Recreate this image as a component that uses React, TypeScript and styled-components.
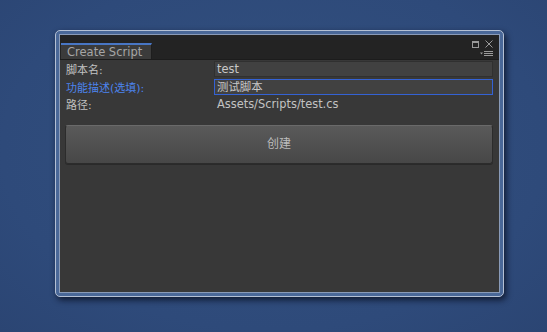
import * as React from "react";
import styled, { createGlobalStyle } from "styled-components";

const GlobalStyle = createGlobalStyle`
  html, body {
    margin: 0;
    padding: 0;
    background: #2e4a7a;
    font-family: "DejaVu Sans", "Noto Sans CJK SC", sans-serif;
  }
`;

interface RowData {
  label: string;
  value: string;
  kind: "field" | "focused" | "text";
}

const rows: RowData[] = [
  { label: "脚本名:", value: "test", kind: "field" },
  { label: "功能描述(选填):", value: "测试脚本", kind: "focused" },
  { label: "路径:", value: "Assets/Scripts/test.cs", kind: "text" },
];

const App: React.FC = () => (
  <Page>
    <GlobalStyle />
    <Window>
      <Frame>
        <Inner>
          <TitleBar>
            <Tab>Create Script</Tab>
            <Controls>
              <ControlRow>
                <MaxIcon />
                <svg width="8" height="8" viewBox="0 0 8 8">
                  <path d="M0.5 0.5 L7.5 7.5 M7.5 0.5 L0.5 7.5" stroke="#9a9a9a" strokeWidth="1" />
                </svg>
              </ControlRow>
              <svg width="13" height="6" viewBox="0 0 13 6">
                <path d="M0 1.5 H3 L1.5 3.5 Z" fill="#9a9a9a" />
                <path d="M4 0.5 H13 M4 2.5 H13 M4 4.5 H13" stroke="#9a9a9a" strokeWidth="1" />
              </svg>
            </Controls>
          </TitleBar>
          <Form>
            {rows.map((row) => (
              <Row key={row.label}>
                <Label $active={row.kind === "focused"}>{row.label}</Label>
                {row.kind === "text" ? (
                  <PlainValue>{row.value}</PlainValue>
                ) : (
                  <Field $focused={row.kind === "focused"}>{row.value}</Field>
                )}
              </Row>
            ))}
            <CreateButton>创建</CreateButton>
          </Form>
        </Inner>
      </Frame>
    </Window>
  </Page>
);

export default App;

const Page = styled.div`
  width: 547px;
  height: 332px;
  box-sizing: border-box;
  padding: 30px 0 0 55px;
  background: radial-gradient(ellipse at 50% 45%, #33517f 0%, #2e4a7a 70%, #2b4573 100%);
  overflow: hidden;
`;

const Window = styled.div`
  width: 449px;
  height: 267px;
  box-sizing: border-box;
  border: 1px solid #b4c0d4;
  border-radius: 5px;
  background: #4a6898;
  box-shadow: 2px 3px 6px rgba(5, 10, 25, 0.75);
  overflow: hidden;
`;

const Frame = styled.div`
  height: 100%;
  box-sizing: border-box;
  padding: 3px;
`;

const Inner = styled.div`
  height: 100%;
  box-sizing: border-box;
  border: 1px solid #8a9bb8;
  background: #383838;
  display: flex;
  flex-direction: column;
`;

const TitleBar = styled.div`
  height: 24px;
  flex-shrink: 0;
  background: #232323;
  border-bottom: 1px solid #1c1c1c;
  display: flex;
  align-items: flex-end;
  justify-content: space-between;
  padding-left: 1px;
`;

const Tab = styled.div`
  width: 91px;
  height: 16px;
  box-sizing: border-box;
  border-top: 2px solid #4876c4;
  border-right: 1px solid #1e1e1e;
  background: #3b3b3b;
  color: #a6a6a6;
  font-size: 11.5px;
  line-height: 14px;
  padding-left: 6px;
  white-space: nowrap;
`;

const Controls = styled.div`
  align-self: stretch;
  display: flex;
  flex-direction: column;
  align-items: flex-end;
  gap: 3px;
  padding: 5px 6px 0 0;
`;

const ControlRow = styled.div`
  display: flex;
  align-items: center;
  gap: 6px;
`;

const MaxIcon = styled.div`
  width: 5px;
  height: 4px;
  border: 1px solid #9a9a9a;
  border-top-width: 2px;
`;

const Form = styled.div`
  display: flex;
  flex-direction: column;
  gap: 1.5px;
  padding: 1px 6px 0 6px;
`;

const Row = styled.div`
  display: grid;
  grid-template-columns: 148px 1fr;
  align-items: center;
  height: 16px;
`;

const Label = styled.div<{ $active?: boolean }>`
  font-family: "DejaVu Sans", "Noto Sans CJK SC", sans-serif;
  font-size: 11px;
  color: ${(p) => (p.$active ? "#4c84ee" : "#c2c2c2")};
  white-space: nowrap;
`;

const Field = styled.div<{ $focused?: boolean }>`
  height: 16px;
  box-sizing: border-box;
  border: 1px solid ${(p) => (p.$focused ? "#3462d4" : "#303030")};
  background: #414141;
  color: #c8c8c8;
  font-size: 11.4px;
  line-height: 14px;
  padding-left: 2px;
`;

const PlainValue = styled.div`
  font-size: 11.4px;
  color: #c2c2c2;
  padding-left: 3px;
  white-space: nowrap;
`;

const CreateButton = styled.div`
  margin: 11px 0 0 -1px;
  height: 39px;
  box-sizing: border-box;
  border: 1px solid #2c2c2c;
  border-top-color: #6a6a6a;
  border-radius: 3px;
  background: linear-gradient(#5a5a5a, #474747);
  box-shadow: 0 1px 0 rgba(0, 0, 0, 0.25);
  color: #bcbcbc;
  font-family: "Noto Sans CJK SC", sans-serif;
  font-size: 12px;
  line-height: 1;
  padding-bottom: 2px;
  display: flex;
  align-items: center;
  justify-content: center;
`;
